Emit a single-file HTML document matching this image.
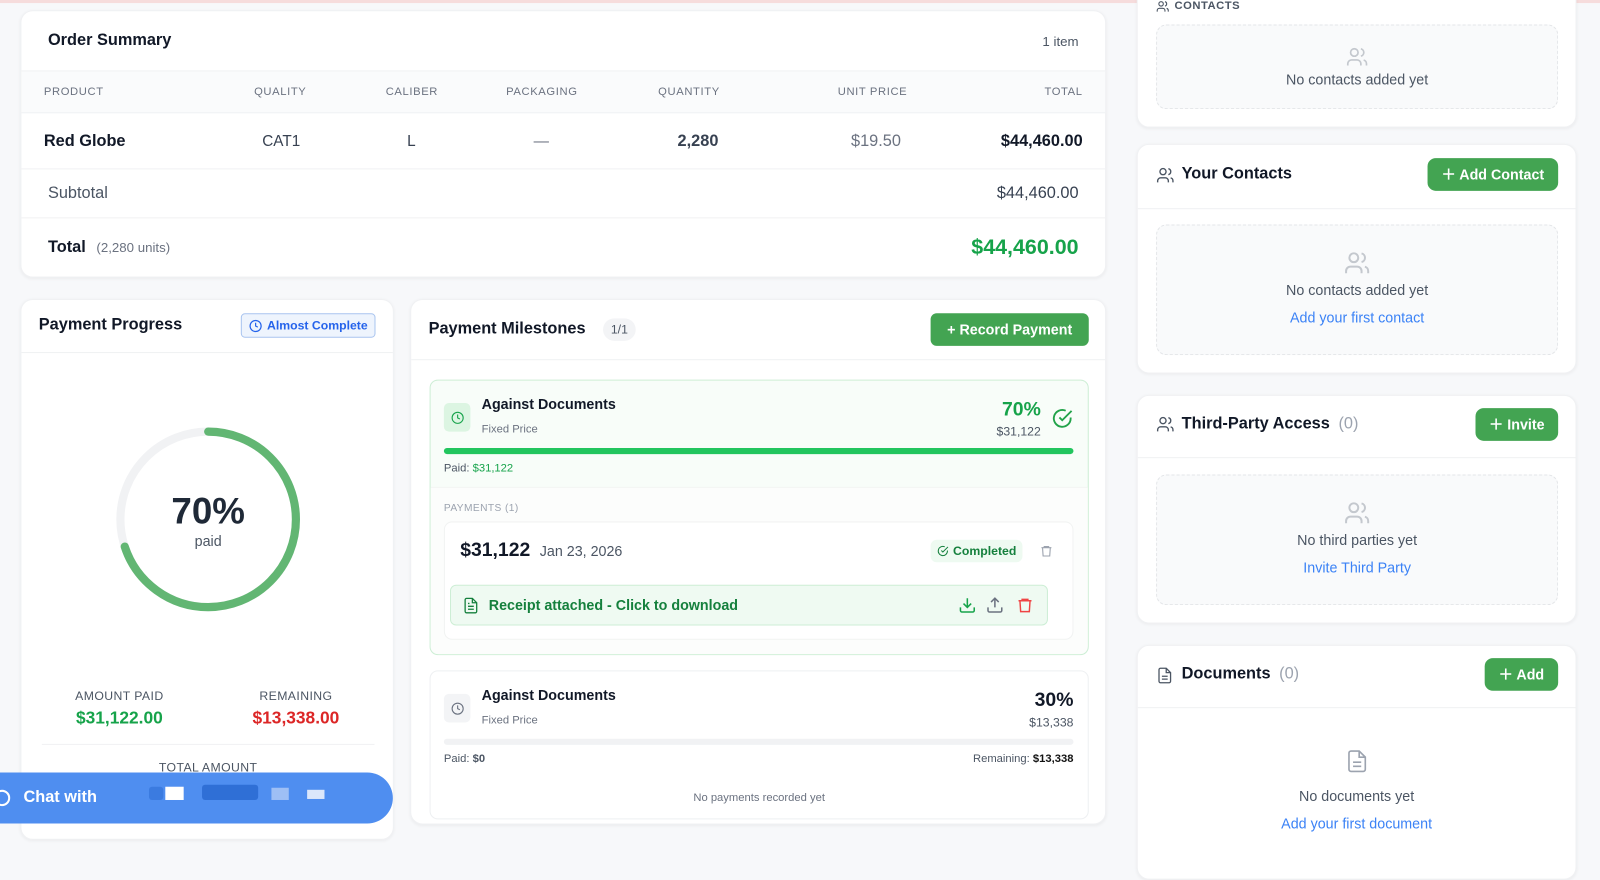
<!DOCTYPE html>
<html><head><meta charset="utf-8"><style>
*{box-sizing:border-box;margin:0;padding:0}
body{width:1600px;height:845px;overflow:hidden;background:#f7f8fa;font-family:"Liberation Sans",sans-serif;color:#111827;position:relative}
#w{position:absolute;left:0;top:0;width:1568px;height:828px;transform:scale(1.0204);transform-origin:0 0}
.a{position:absolute}
.card{position:absolute;background:#fff;border-radius:12px;box-shadow:0 1px 3px rgba(0,0,0,.05);border:1px solid #f0f1f3}
.th{font-size:11px;color:#6b7280;letter-spacing:.6px}
.btn{position:absolute;background:#43a452;color:#fff;border-radius:8px;font-size:14px;font-weight:bold;display:flex;align-items:center;justify-content:center;gap:6px}
.empty{position:absolute;border:1px dashed #e3e5e8;border-radius:10px;background:#f9fafb;text-align:center;font-size:14px;color:#4b5563}
.link{color:#3b82f6;font-size:14px}
svg{display:inline-block}
</style></head><body>
<div id="w">
<div class="a" style="left:0;top:0;width:1568px;height:3px;background:#f6dcdc"></div>

<!-- Order summary -->
<div class="card" style="left:20px;top:10px;width:1064px;height:262px">
 <div class="a" style="left:26px;top:20px;font-size:16px;font-weight:bold">Order Summary</div>
 <div class="a" style="right:26px;top:22px;font-size:13px;color:#4b5563">1 item</div>
 <div class="a" style="left:0;top:58px;width:100%;height:42px;background:#fafbfc;border-top:1px solid #f0f1f3;border-bottom:1px solid #f0f1f3"></div>
 <div class="a th" style="left:22px;top:73px">PRODUCT</div>
 <div class="a th" style="left:228px;top:73px">QUALITY</div>
 <div class="a th" style="left:357px;top:73px">CALIBER</div>
 <div class="a th" style="left:475px;top:73px">PACKAGING</div>
 <div class="a th" style="left:624px;top:73px">QUANTITY</div>
 <div class="a th" style="left:800px;top:73px">UNIT PRICE</div>
 <div class="a th" style="right:22px;top:73px">TOTAL</div>
 <div class="a" style="left:22px;top:119px;font-size:16px;font-weight:bold">Red Globe</div>
 <div class="a" style="left:236px;top:119px;font-size:15px;color:#374151">CAT1</div>
 <div class="a" style="left:378px;top:119px;font-size:15px;color:#374151">L</div>
 <div class="a" style="left:502px;top:119px;font-size:15px;color:#6b7280">—</div>
 <div class="a" style="left:643px;top:119px;font-size:16px;font-weight:bold;color:#374151">2,280</div>
 <div class="a" style="left:813px;top:119px;font-size:16px;color:#6b7280">$19.50</div>
 <div class="a" style="right:22px;top:119px;font-size:16px;font-weight:bold">$44,460.00</div>
 <div class="a" style="left:0;top:154px;width:100%;border-top:1px solid #f0f1f3"></div>
 <div class="a" style="left:26px;top:170px;font-size:16px;color:#4b5563">Subtotal</div>
 <div class="a" style="right:26px;top:170px;font-size:16px;color:#374151">$44,460.00</div>
 <div class="a" style="left:0;top:202px;width:100%;border-top:1px solid #f0f1f3"></div>
 <div class="a" style="left:26px;top:223px;font-size:16px;font-weight:bold">Total <span style="font-weight:normal;font-size:13px;color:#6b7280;margin-left:6px">(2,280 units)</span></div>
 <div class="a" style="right:26px;top:220px;font-size:21px;font-weight:bold;color:#16a34a">$44,460.00</div>
</div>

<!-- Payment progress -->
<div class="card" style="left:20px;top:293px;width:366px;height:530px">
 <div class="a" style="left:17px;top:16px;font-size:16px;font-weight:bold">Payment Progress</div>
 <div class="a" style="left:215px;top:13px;width:132px;height:24px;border:1px solid #a9c4ef;background:#eef4fd;border-radius:4px;color:#2563eb;font-size:12px;font-weight:bold;display:flex;align-items:center;justify-content:center;gap:5px"><svg width="13" height="13" viewBox="0 0 24 24" fill="none" stroke="#2563eb" stroke-width="2.2"><circle cx="12" cy="12" r="10"/><path d="M12 6v6l4 2"/></svg>Almost Complete</div>
 <div class="a" style="left:0;top:51px;width:100%;border-top:1px solid #f0f1f3"></div>
 <svg class="a" style="left:90px;top:122px" width="186" height="186" viewBox="0 0 186 186"><circle cx="93" cy="93" r="86" fill="none" stroke="#f1f2f4" stroke-width="8"/><circle cx="93" cy="93" r="86" fill="none" stroke="#62b673" stroke-width="8" stroke-linecap="round" stroke-dasharray="378 540" transform="rotate(-90 93 93)"/></svg>
 <div class="a" style="left:0;width:366px;top:186px;text-align:center;font-size:36px;font-weight:bold;color:#1f2937">70%</div>
 <div class="a" style="left:0;width:366px;top:228px;text-align:center;font-size:14px;color:#4b5563">paid</div>
 <div class="a" style="left:35px;width:122px;top:381px;text-align:center;font-size:12px;color:#4b5563;letter-spacing:.4px">AMOUNT PAID</div>
 <div class="a" style="left:35px;width:122px;top:400px;text-align:center;font-size:17px;font-weight:bold;color:#16a34a">$31,122.00</div>
 <div class="a" style="left:208px;width:122px;top:381px;text-align:center;font-size:12px;color:#4b5563;letter-spacing:.4px">REMAINING</div>
 <div class="a" style="left:208px;width:122px;top:400px;text-align:center;font-size:17px;font-weight:bold;color:#dc2626">$13,338.00</div>
 <div class="a" style="left:20px;top:435px;width:326px;border-top:1px solid #f0f1f3"></div>
 <div class="a" style="left:0;width:366px;top:451px;text-align:center;font-size:12px;color:#4b5563;letter-spacing:.4px">TOTAL AMOUNT</div>
</div>
<div class="a" style="left:0;top:757px;width:385px;height:50px;background:#4f8ef0;border-radius:0 25px 25px 0;color:#fff;font-size:16px;font-weight:bold">
 <div class="a" style="left:-6px;top:17px;width:16px;height:16px;border:2px solid #fff;border-radius:50%"></div>
 <div class="a" style="left:23px;top:16px">Chat with</div>
 <div class="a" style="left:146px;top:14px;width:14px;height:13px;background:#3b7be0;border-radius:3px"></div>
 <div class="a" style="left:162px;top:14px;width:18px;height:13px;background:#fff"></div>
 <div class="a" style="left:198px;top:12px;width:55px;height:15px;background:#2f6fd6;border-radius:3px"></div>
 <div class="a" style="left:266px;top:15px;width:17px;height:12px;background:#9ebff5"></div>
 <div class="a" style="left:301px;top:17px;width:17px;height:9px;background:#dbe7fb"></div>
</div>

<!-- Payment Milestones -->
<div class="card" style="left:402px;top:293px;width:682px;height:515px">
 <div class="a" style="left:17px;top:20px;font-size:16px;font-weight:bold">Payment Milestones</div>
 <div class="a" style="left:188px;top:18px;width:32px;height:22px;border-radius:11px;background:#f3f4f6;font-size:12px;color:#4b5563;text-align:center;line-height:22px">1/1</div>
 <div class="btn" style="left:509px;top:13px;width:155px;height:32px;border-radius:6px">+ Record Payment</div>
 <div class="a" style="left:0;top:58px;width:100%;border-top:1px solid #f0f1f3"></div>
 <div class="a" style="left:18px;top:78px;width:646px;height:270px;border:1.5px solid #cdeed5;border-radius:8px;background:#f8fdf9">
  <div class="a" style="left:13px;top:22px;width:26px;height:28px;background:#dcf5e2;border-radius:5px;display:flex;align-items:center;justify-content:center"><svg width="13" height="13" viewBox="0 0 24 24" fill="none" stroke="#16a34a" stroke-width="2"><circle cx="12" cy="12" r="10"/><path d="M12 6v6l4 2"/></svg></div>
  <div class="a" style="left:50px;top:15px;font-size:14px;font-weight:bold">Against Documents</div>
  <div class="a" style="left:50px;top:42px;font-size:11px;color:#6b7280">Fixed Price</div>
  <div class="a" style="right:46px;top:18px;font-size:19px;font-weight:bold;color:#16a34a">70%</div>
  <div class="a" style="right:46px;top:43px;font-size:12px;color:#4b5563">$31,122</div>
  <svg class="a" style="right:14px;top:26px" width="22" height="22" viewBox="0 0 24 24" fill="none" stroke="#22a34a" stroke-width="2"><path d="M21 11.1V12a9 9 0 1 1-5.3-8.2"/><path d="M22 4 12 14l-3-3"/></svg>
  <div class="a" style="left:13px;top:66px;width:617px;height:6px;background:#22c55e;border-radius:3px"></div>
  <div class="a" style="left:13px;top:80px;font-size:11px;color:#4b5563">Paid: <b style="color:#16a34a;font-weight:normal">$31,122</b></div>
  <div class="a" style="left:0;top:104px;width:100%;height:164px;background:#fcfdfc;border-top:1px solid #eef3ef;border-radius:0 0 8px 8px"></div>
  <div class="a" style="left:13px;top:120px;font-size:10px;color:#9ca3af;letter-spacing:.4px">PAYMENTS (1)</div>
  <div class="a" style="left:13px;top:138px;width:617px;height:116px;background:#fff;border-radius:8px;border:1px solid #f1f3f2">
   <div class="a" style="left:15px;top:17px;font-size:19px;font-weight:bold">$31,122 <span style="font-weight:normal;font-size:14px;color:#4b5563;margin-left:4px">Jan 23, 2026</span></div>
   <div class="a" style="left:476px;top:17px;width:90px;height:22px;background:#eefaf1;border-radius:6px;color:#15803d;font-size:12px;font-weight:bold;display:flex;align-items:center;justify-content:center;gap:4px"><svg width="12" height="12" viewBox="0 0 24 24" fill="none" stroke="#15803d" stroke-width="2"><path d="M21 11.1V12a9 9 0 1 1-5.3-8.2"/><path d="M22 4 12 14l-3-3"/></svg>Completed</div>
   <svg class="a" style="left:583px;top:21px" width="13" height="14" viewBox="0 0 24 24" fill="none" stroke="#9ca3af" stroke-width="2"><path d="M3 6h18M8 6V4h8v2M5 6l1 15h12l1-15"/></svg>
   <div class="a" style="left:5px;top:61px;width:586px;height:40px;background:#effaf2;border:1px solid #cdeed5;border-radius:6px">
    <svg class="a" style="left:11px;top:10px" width="17" height="19" viewBox="0 0 24 24" fill="none" stroke="#15803d" stroke-width="1.8"><path d="M14 2H6a2 2 0 0 0-2 2v16a2 2 0 0 0 2 2h12a2 2 0 0 0 2-2V8z"/><path d="M14 2v6h6M8 13h8M8 17h8M8 9h2"/></svg>
    <div class="a" style="left:37px;top:11px;font-size:14px;color:#15803d;font-weight:bold">Receipt attached - Click to download</div>
    <svg class="a" style="left:497px;top:10px" width="18" height="18" viewBox="0 0 24 24" fill="none" stroke="#16a34a" stroke-width="2"><path d="M21 15v4a2 2 0 0 1-2 2H5a2 2 0 0 1-2-2v-4M7 10l5 5 5-5M12 15V3"/></svg>
    <svg class="a" style="left:524px;top:10px" width="18" height="18" viewBox="0 0 24 24" fill="none" stroke="#6b7280" stroke-width="2"><path d="M21 15v4a2 2 0 0 1-2 2H5a2 2 0 0 1-2-2v-4M17 8l-5-5-5 5M12 3v12"/></svg>
    <svg class="a" style="left:554px;top:10px" width="17" height="18" viewBox="0 0 24 24" fill="none" stroke="#ef4444" stroke-width="2"><path d="M3 6h18M8 6V4h8v2M5 6l1 15h12l1-15"/></svg>
   </div>
  </div>
 </div>
 <div class="a" style="left:18px;top:363px;width:646px;height:146px;border:1px solid #eef0f2;border-radius:8px;background:#fff">
  <div class="a" style="left:13px;top:22px;width:26px;height:28px;background:#f3f4f6;border-radius:5px;display:flex;align-items:center;justify-content:center"><svg width="13" height="13" viewBox="0 0 24 24" fill="none" stroke="#6b7280" stroke-width="2"><circle cx="12" cy="12" r="10"/><path d="M12 6v6l4 2"/></svg></div>
  <div class="a" style="left:50px;top:15px;font-size:14px;font-weight:bold">Against Documents</div>
  <div class="a" style="left:50px;top:42px;font-size:11px;color:#6b7280">Fixed Price</div>
  <div class="a" style="right:14px;top:18px;font-size:19px;font-weight:bold">30%</div>
  <div class="a" style="right:14px;top:43px;font-size:12px;color:#4b5563">$13,338</div>
  <div class="a" style="left:13px;top:66px;width:617px;height:6px;background:#f1f2f4;border-radius:3px"></div>
  <div class="a" style="left:13px;top:80px;font-size:11px;color:#4b5563">Paid: <b>$0</b></div>
  <div class="a" style="right:14px;top:80px;font-size:11px;color:#4b5563">Remaining: <b style="color:#111">$13,338</b></div>
  <div class="a" style="left:0;width:100%;top:118px;text-align:center;font-size:11px;color:#6b7280">No payments recorded yet</div>
 </div>
</div>

<!-- Right column -->
<div class="card" style="left:1114px;top:-20px;width:431px;height:145px">
 <svg class="a" style="left:18px;top:19px" width="13" height="13" viewBox="0 0 24 24" fill="none" stroke="#4b5563" stroke-width="2"><circle cx="9" cy="7" r="4"/><path d="M2 21v-2a4 4 0 0 1 4-4h6a4 4 0 0 1 4 4v2M16 3.1a4 4 0 0 1 0 7.8M22 21v-2a4 4 0 0 0-3-3.9"/></svg>
 <div class="a" style="left:36px;top:19px;font-size:11px;font-weight:bold;color:#4b5563;letter-spacing:.5px">CONTACTS</div>
 <div class="empty" style="left:18px;top:43px;width:394px;height:83px"><svg style="margin-top:20px" width="22" height="22" viewBox="0 0 24 24" fill="none" stroke="#c4c8ce" stroke-width="1.8"><circle cx="9" cy="7" r="4"/><path d="M2 21v-2a4 4 0 0 1 4-4h6a4 4 0 0 1 4 4v2M16 3.1a4 4 0 0 1 0 7.8M22 21v-2a4 4 0 0 0-3-3.9"/></svg><div>No contacts added yet</div></div>
</div>
<div class="card" style="left:1114px;top:141px;width:431px;height:225px">
 <svg class="a" style="left:18px;top:21px" width="18" height="18" viewBox="0 0 24 24" fill="none" stroke="#4b5563" stroke-width="1.8"><circle cx="9" cy="7" r="4"/><path d="M2 21v-2a4 4 0 0 1 4-4h6a4 4 0 0 1 4 4v2M16 3.1a4 4 0 0 1 0 7.8M22 21v-2a4 4 0 0 0-3-3.9"/></svg>
 <div class="a" style="left:43px;top:20px;font-size:16px;font-weight:bold">Your Contacts</div>
 <div class="btn" style="left:284px;top:13px;width:128px;height:32px">＋ Add Contact</div>
 <div class="a" style="left:0;top:62px;width:100%;border-top:1px solid #f0f1f3"></div>
 <div class="empty" style="left:18px;top:78px;width:394px;height:128px"><svg style="margin-top:24px" width="26" height="26" viewBox="0 0 24 24" fill="none" stroke="#c4c8ce" stroke-width="1.8"><circle cx="9" cy="7" r="4"/><path d="M2 21v-2a4 4 0 0 1 4-4h6a4 4 0 0 1 4 4v2M16 3.1a4 4 0 0 1 0 7.8M22 21v-2a4 4 0 0 0-3-3.9"/></svg><div style="margin-top:2px">No contacts added yet</div><div class="link" style="margin-top:11px">Add your first contact</div></div>
</div>
<div class="card" style="left:1114px;top:387px;width:431px;height:224px">
 <svg class="a" style="left:18px;top:19px" width="18" height="18" viewBox="0 0 24 24" fill="none" stroke="#4b5563" stroke-width="1.8"><circle cx="9" cy="7" r="4"/><path d="M2 21v-2a4 4 0 0 1 4-4h6a4 4 0 0 1 4 4v2M16 3.1a4 4 0 0 1 0 7.8M22 21v-2a4 4 0 0 0-3-3.9"/></svg>
 <div class="a" style="left:43px;top:19px;font-size:16px;font-weight:bold">Third-Party Access <span style="font-weight:normal;color:#9ca3af;margin-left:4px">(0)</span></div>
 <div class="btn" style="left:331px;top:12px;width:81px;height:32px">＋ Invite</div>
 <div class="a" style="left:0;top:60px;width:100%;border-top:1px solid #f0f1f3"></div>
 <div class="empty" style="left:18px;top:77px;width:394px;height:128px"><svg style="margin-top:24px" width="26" height="26" viewBox="0 0 24 24" fill="none" stroke="#c4c8ce" stroke-width="1.8"><circle cx="9" cy="7" r="4"/><path d="M2 21v-2a4 4 0 0 1 4-4h6a4 4 0 0 1 4 4v2M16 3.1a4 4 0 0 1 0 7.8M22 21v-2a4 4 0 0 0-3-3.9"/></svg><div style="margin-top:2px">No third parties yet</div><div class="link" style="margin-top:11px">Invite Third Party</div></div>
</div>
<div class="card" style="left:1114px;top:632px;width:431px;height:230px">
 <svg class="a" style="left:18px;top:20px" width="17" height="18" viewBox="0 0 24 24" fill="none" stroke="#4b5563" stroke-width="1.8"><path d="M14 2H6a2 2 0 0 0-2 2v16a2 2 0 0 0 2 2h12a2 2 0 0 0 2-2V8z"/><path d="M14 2v6h6M8 13h8M8 17h8"/></svg>
 <div class="a" style="left:43px;top:19px;font-size:16px;font-weight:bold">Documents <span style="font-weight:normal;color:#9ca3af;margin-left:4px">(0)</span></div>
 <div class="btn" style="left:340px;top:12px;width:72px;height:32px">＋ Add</div>
 <div class="a" style="left:0;top:60px;width:100%;border-top:1px solid #f0f1f3"></div>
 <div class="a" style="left:0;width:100%;top:100px;text-align:center"><svg width="24" height="26" viewBox="0 0 24 24" fill="none" stroke="#9ca3af" stroke-width="1.6"><path d="M14 2H6a2 2 0 0 0-2 2v16a2 2 0 0 0 2 2h12a2 2 0 0 0 2-2V8z"/><path d="M14 2v6h6M8 13h8M8 17h8"/></svg><div style="font-size:14px;color:#4b5563;margin-top:8px">No documents yet</div><div class="link" style="margin-top:11px">Add your first document</div></div>
</div>
</div>
</body></html>
